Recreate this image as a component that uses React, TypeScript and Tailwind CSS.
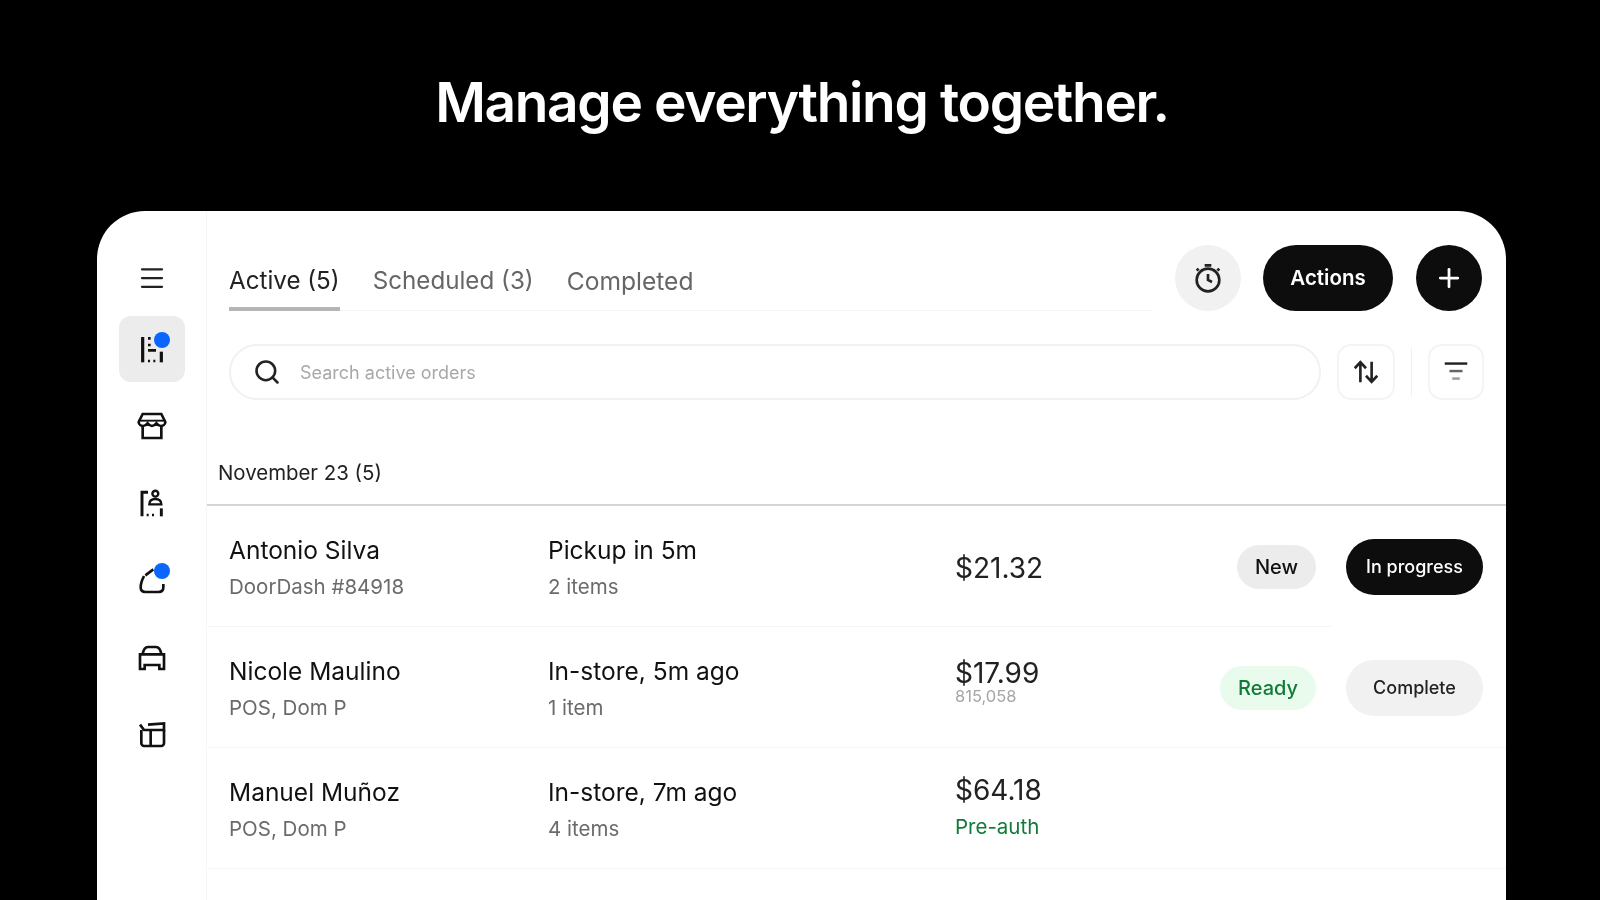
import React from 'react';
import { Plus, Search, Menu } from 'lucide-react';

type Order = {
    name: string;
    source: string;
    when: string;
    items: string;
    price: string;
    subPrice?: string;
    preAuth?: boolean;
    status?: 'New' | 'Ready';
    action?: 'In progress' | 'Complete';
    shortRule?: boolean;
};

const orders: Order[] = [
    { name: 'Antonio Silva', source: 'DoorDash #84918', when: 'Pickup in 5m', items: '2 items', price: '$21.32', status: 'New', action: 'In progress', shortRule: true },
    { name: 'Nicole Maulino', source: 'POS, Dom P', when: 'In-store, 5m ago', items: '1 item', price: '$17.99', subPrice: '815,058', status: 'Ready', action: 'Complete' },
    { name: 'Manuel Muñoz', source: 'POS, Dom P', when: 'In-store, 7m ago', items: '4 items', price: '$64.18', preAuth: true },
];

const Icon: React.FC<{ children: React.ReactNode; className?: string }> = ({ children, className }) => (
    <svg viewBox="0 0 24 24" fill="none" stroke="#111" strokeWidth="2" className={className ?? 'w-[32px] h-[32px]'}>
        {children}
    </svg>
);

const OrdersIcon = () => (
    <Icon>
        <path d="M5 3v19" strokeWidth="2.4" />
        <path d="M9 4h2M9 9h2M9 13h6M9 21h1.5M13 21h1.5" />
        <path d="M19 14v8" strokeWidth="2.4" />
    </Icon>
);
const StoreIcon = () => (
    <Icon>
        <path d="M5 3h14l3 6c0 2-2 3-3.4 3-1.500 0-2.600-1-3.300-2-.7 1-1.800 2-3.300 2s-2.600-1-3.300-2c-.7 1-1.800 2-3.300 2C4 12 2 11 2 9z" />
        <path d="M2 8h20" strokeWidth="1.400" />
        <path d="M5 12v9h14v-9" />
    </Icon>
);
const PickupIcon = () => (
    <Icon>
        <path d="M9 4H4.500v18" strokeWidth="2.2" />
        <circle cx="14.500" cy="5" r="2.200" strokeWidth="1.800" />
        <path d="M10 13c0-3 2-4 4.500-4s4.500 1 4.500 4z" strokeWidth="1.800" />
        <path d="M8 21h1.500M12 21h1.500" />
        <path d="M19 16v6" strokeWidth="2.2" />
    </Icon>
);
const BagIcon = () => (
    <Icon>
        <path d="M13 4 7 8.500" />
        <path d="M6 9c-1.500 3-2.500 6-2.500 8.500C3.500 20 5 21 7 21h10c2 0 3.500-1 3.500-3.500V15" />
    </Icon>
);
const CarIcon = () => (
    <Icon>
        <path d="M5 10c.5-3 1.500-5.500 4-5.500h6c2.500 0 3.500 2.500 4 5.500" />
        <path d="M2 10h20M3 10v11h3.500v-3h11v3H21V10" />
    </Icon>
);
const BoxIcon = () => (
    <Icon>
        <path d="M3 5l3 4h15V4L9 5" />
        <path d="M4 9v10c0 1 1 2 2 2h13c1 0 2-1 2-2V9M11 9v12" />
    </Icon>
);
const TimerIcon = () => (
    <svg viewBox="0 0 24 24" fill="none" stroke="#222" strokeWidth="2" className="w-[32px] h-[32px]">
        <circle cx="12" cy="13.500" r="8.500" />
        <path d="M9.500 2.500h5M12 9v4.500l3 1.500M19 5l1.500 1.500M5 5 3.500 6.500" />
    </svg>
);
const SortIcon = () => (
    <svg viewBox="0 0 32 32" fill="none" stroke="#222" strokeWidth="2.800" className="w-[30px] h-[30px]">
        <path d="M10 27V6M4 12 10 5.500 16 12" />
        <path d="M22 5v21M16 20l6 6.500 6-6.500" />
    </svg>
);
const FilterIcon = () => (
    <svg viewBox="0 0 32 32" fill="none" className="w-[30px] h-[30px]">
        <path d="M4 7h24" stroke="#222" strokeWidth="2.600" />
        <path d="M9 15h14" stroke="#666" strokeWidth="2.600" />
        <path d="M12 23h8" stroke="#999" strokeWidth="2.600" />
    </svg>
);

const NavItem: React.FC<{ active?: boolean; dot?: boolean; children: React.ReactNode }> = ({ active, dot, children }) => (
    <div className={`relative w-[66px] h-[66px] rounded-[12px] flex items-center justify-center ${active ? 'bg-[#ececec]' : ''}`}>
        {children}
        {dot && <span className="absolute top-[16px] right-[15px] w-[16px] h-[16px] rounded-full bg-[#0a66ff]" />}
    </div>
);

const OrderRow: React.FC<{ order: Order }> = ({ order }) => (
    <div className="relative h-[121px] flex items-center pl-[22px] pr-[23px] shrink-0">
        <div className="w-[319px] flex flex-col gap-[9px] pt-[2px]">
            <p className="text-[24.5px] leading-[30px] text-[#111]">{order.name}</p>
            <p className="text-[20.5px] leading-[26px] text-[#6b6b6b]">{order.source}</p>
        </div>
        <div className="w-[407px] flex flex-col gap-[9px] pt-[2px]">
            <p className="text-[24.5px] leading-[30px] text-[#111]">{order.when}</p>
            <p className="text-[20.5px] leading-[26px] text-[#6b6b6b]">{order.items}</p>
        </div>
        <div className={`flex flex-col ${order.subPrice ? 'pb-[12px]' : ''} ${order.preAuth ? 'pb-px' : ''} ${order.status === 'New' ? 'pt-[2px]' : ''}`}>
            <p className="text-[28px] leading-[28px] text-[#222]">{order.price}</p>
            {order.subPrice && <p className="text-[16.5px] leading-[18px] text-[#a6a6a6]">{order.subPrice}</p>}
            {order.preAuth && <p className="text-[20.5px] leading-[26px] mt-[10px] text-[#117a37]">Pre-auth</p>}
        </div>
        <div className="ml-auto flex items-center gap-[30px]">
            {order.status && (
                <span className={`h-[44px] px-[18px] rounded-full flex items-center text-[20px] font-medium ${order.status === 'Ready' ? 'bg-[#e8fbec] text-[#117a37]' : 'bg-[#ececec] text-[#111]'}`}>
                    {order.status}
                </span>
            )}
            {order.action && (
                <button className={`w-[137px] h-[56px] rounded-full flex items-center justify-center text-[18px] font-medium ${order.action === 'In progress' ? 'bg-[#0d0d0d] text-white' : 'bg-[#f1f1f1] text-[#222]'}`}>
                    {order.action}
                </button>
            )}
        </div>
        {order.action || order.preAuth ? (
            <div className={`absolute bottom-0 left-0 h-px bg-[#f4f4f4] ${order.shortRule ? 'w-[1124px]' : 'right-0'}`} />
        ) : null}
    </div>
);

const App: React.FC = () => {
    return (
        <div className="w-[1600px] h-[900px] bg-black overflow-hidden flex flex-col items-center font-['Inter',sans-serif] blur-[0.7px]">
            <h1 className="h-[211px] shrink-0 pt-[68px] pl-[4px] text-[55px] leading-[68px] font-semibold tracking-[-1.350px] text-white">Manage everything together.</h1>

            <div className="w-[1409px] h-[689px] ml-[3px] shrink-0 bg-white rounded-t-[48px] flex">
                <aside className="w-[110px] shrink-0 border-r border-[#f6f6f6] flex flex-col items-center pt-[34px]">
                    <div className="h-[66px] flex items-center justify-center text-[#222]"><Menu size={30} strokeWidth={1.800} /></div>
                    <div className="mt-[5px] flex flex-col gap-[11px]">
                        <NavItem active dot><OrdersIcon /></NavItem>
                        <NavItem><StoreIcon /></NavItem>
                        <NavItem><PickupIcon /></NavItem>
                        <NavItem dot><BagIcon /></NavItem>
                        <NavItem><CarIcon /></NavItem>
                        <NavItem><BoxIcon /></NavItem>
                    </div>
                </aside>

                <main className="flex-1 min-w-0 flex flex-col pt-[34px]">
                    <div className="flex items-start pl-[22px] pr-[24px]">
                        <div className="w-[924px] h-[66px] flex gap-[33px] border-b border-[#f4f4f4]">
                            <div className="h-[66px] pt-[11px] border-b-[4px] border-[#b5b5b5] flex items-center text-[24.2px] text-[#222]">Active (5)</div>
                            <div className="h-[66px] pt-[7px] flex items-center text-[24.2px] text-[#666]">Scheduled (3)</div>
                            <div className="h-[66px] pt-[6px] flex items-center text-[24.6px] text-[#666]">Completed</div>
                        </div>
                        <div className="ml-auto flex items-center gap-[23px]">
                            <div className="-mr-px w-[66px] h-[66px] rounded-full bg-[#f1f1f1] flex items-center justify-center"><TimerIcon /></div>
                            <button className="w-[130px] h-[66px] rounded-full bg-[#0d0d0d] text-white text-[20.5px] font-semibold">Actions</button>
                            <div className="w-[66px] h-[66px] rounded-full bg-[#0d0d0d] text-white flex items-center justify-center"><Plus size={30} strokeWidth={2.200} /></div>
                        </div>
                    </div>

                    <div className="mt-[33px] flex items-center pl-[22px] pr-[22px]">
                        <div className="w-[1093px] h-[56px] rounded-full border-2 border-[#f1f1f1] flex items-center pl-[22px] gap-[19px]">
                            <Search size={28} strokeWidth={2.200} className="text-[#222]" />
                            <span className="text-[18px] text-[#a8a8a8]">Search active orders</span>
                        </div>
                        <div className="ml-[16px] w-[58px] h-[56px] rounded-[14px] border-2 border-[#f4f4f4] flex items-center justify-center"><SortIcon /></div>
                        <div className="ml-[16px] w-px h-[50px] bg-[#f1f1f1]" />
                        <div className="ml-[16px] w-[56px] h-[56px] rounded-[14px] border-2 border-[#f4f4f4] flex items-center justify-center"><FilterIcon /></div>
                    </div>

                    <div className="mt-[58px] h-[48px] pl-[11px] border-b-2 border-[#d4d4d4] text-[20.4px] leading-[30px] text-[#222]">November 23 (5)</div>

                    <div className="flex flex-col">
                        {orders.map(order => <OrderRow key={order.name} order={order} />)}
                    </div>
                </main>
            </div>
        </div>
    );
};

export default App;
